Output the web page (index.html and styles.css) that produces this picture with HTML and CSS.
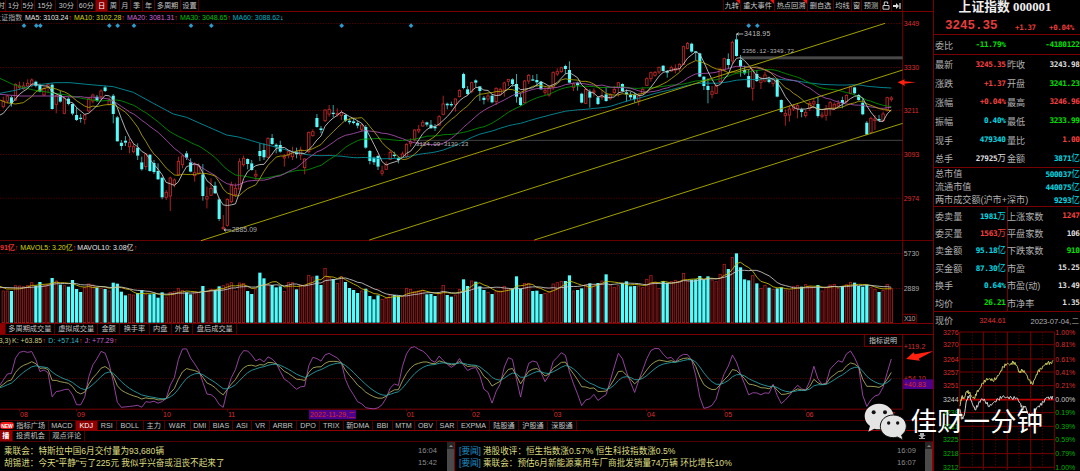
FILE: index.html
```html
<!DOCTYPE html>
<html lang="zh-CN">
<head>
    <meta charset="UTF-8">
    <title>上证指数 000001</title>
    <link rel="stylesheet" href="styles.css">
</head>
<body>
    <div class="app">
        <main class="left">
            <nav class="toolbar">
                <div class="tabs periods">
                    <span class="cut">时</span><span>1分</span><span>5分</span><span>15分</span><span>30分</span><span>60分</span><span class="active">日</span><span>周</span><span>月</span><span>季</span><span>年</span><span>多周期</span><span>设置</span>
                </div>
                <div class="tabs tools">
                    <span class="hot">九转</span><span class="hot">重大事件</span><span class="hot">热点回溯</span><span>删自选</span><span>均线</span><span>窗</span><span>预测</span>
                    <span><svg width="8" height="9" viewBox="0 0 8 9"><path d="M1 4.5h6v3.7H1zM2.3 4.5V1h3.4v2" fill="none" stroke="#ccc"/></svg></span>
                    <span><svg width="8" height="8" viewBox="0 0 8 8"><path d="M0 3h3V1l3 3-3 3V5H0zM6.4 1h1.2v6H6.4z" fill="#ddd"/></svg></span>
                </div>
            </nav>

            <!-- Price -->
            <svg class="price" viewBox="0 36 2802 687">
                <path class="grid" d="M0 70.5H2708M0 202.5H2708M0 331.5H2708M0 463.5H2708M0 594.5H2708"/>
                <path class="frame" d="M2708 36V723M0 722H2800"/>
                <path d="M1240 421H2708" stroke="#444" stroke-width="3"/>
                <rect x="2220" y="169" width="488" height="9" fill="#484848"/>
                <g id="candles"></g>
                <g id="priceLines"></g>
                <path class="trend" d="M603 722L2655 70M1108 720L2708 210M1603 720L2708 370"/>
                <g id="marks"></g>
                <text y="59"><tspan x="-17" fill="#aaa" textLength="84">上证指数</tspan><tspan x="75" fill="#e4e4e4" textLength="130">MA5: 3103.24</tspan><tspan class="up">↑</tspan><tspan x="222" fill="#d4d400" textLength="142">MA10: 3102.28</tspan><tspan class="up">↑</tspan><tspan x="381" fill="#cc64d4" textLength="142">MA20: 3081.31</tspan><tspan class="up">↑</tspan><tspan x="540" fill="#00c000" textLength="142">MA30: 3048.65</tspan><tspan class="up">↑</tspan><tspan x="698" fill="#00b0c0" textLength="142">MA60: 3088.62</tspan><tspan class="down">↓</tspan></text>
                <text x="2232" y="108" fill="#bbb" textLength="79">3418.95</text>
                <path d="M2210 102h20M2216 98l-6 4 6 4M672 690h22M678 686l-6 4 6 4" fill="none" stroke="#ccc" stroke-width="2.5"/>
                <text x="695" y="696" fill="#aaa" textLength="76">2885.09</text>
                <text class="mono" x="2226" y="160" textLength="156">3356.12-3349.72</text>
                <text class="mono" x="1247" y="438" textLength="158">3124.09-3130.23</text>
                <g class="axis">
                    <text x="2711" y="78">3449</text><text x="2711" y="210">3330</text><text x="2711" y="340">3211</text><text x="2711" y="471">3093</text><text x="2711" y="602">2974</text>
                </g>
                <path d="M2693 247L2714 238 2713 244 2748 247 2713 251 2715 258Z" fill="#ff2010"/>
            </svg>

            <!-- Volume -->
            <svg class="volume" viewBox="0 18 2802 249">
                <path class="grid" d="M0 55.5H2708M0 160.5H2708"/>
                <g id="bars"></g>
                <g id="volLines"></g>
                <path class="frame" d="M2708 18V267M0 265.5H2800"/>
                <text y="45"><tspan x="0" class="up">91亿↑</tspan><tspan x="61" fill="#d4d400">MAVOL5: 3.20亿</tspan><tspan class="up">↑</tspan><tspan x="232" fill="#e4e4e4">MAVOL10: 3.08亿</tspan><tspan class="up">↑</tspan></text>
                <g fill="#aaa">
                    <text x="2711" y="64">5730</text><text x="2711" y="167">2889</text><text x="2712" y="257" textLength="34">X10</text>
                </g>
                <path class="frame" d="M2708 238H2749V262H2708"/>
            </svg>

            <nav class="tabs voltabs">
                <span class="active"></span><span>多周期成交量</span><span>虚拟成交量</span><span>金额</span><span>换手率</span><span>内盘</span><span>外盘</span><span>盘后成交量</span>
            </nav>

            <!-- KDJ and date axis -->
            <svg class="kdj" viewBox="0 297 2802 258">
                <path class="grid" d="M0 334.5H2708M0 430.5H2708"/>
                <path class="frame" d="M0 298.5H2800M2708 297V523M0 522.5H2708M2593 298V334H2708"/>
                <path class="frame" d="M59 523v6M230 523v6M488 523v6M683 523v6M1220 523v6M1415 523v6M1660 523v6M1940 523v6M2173 523v6M2416 523v6"/>
                <g id="kdjLines"></g>
                <text y="324"><tspan x="-4" fill="#c8c880">3,3)</tspan><tspan x="36" fill="#c8c880">K: +63.85</tspan><tspan class="up">↑</tspan><tspan x="145" fill="#30b8c0">D: +57.14</tspan><tspan class="up">↑</tspan><tspan x="254" fill="#cc64d4">J: +77.29</tspan><tspan class="up">↑</tspan></text>
                <text x="2607" y="325" fill="#ccc" textLength="84">指标说明</text>
                <g class="axis">
                    <text x="2711" y="343" textLength="65">+119.2</text>
                    <text x="2711" y="437" textLength="67">+54.10</text>
                    <rect x="2709" y="433" width="91" height="29" fill="#4c008c"/>
                    <text x="2711" y="455" textLength="67">+40.83</text>
                    <text x="60" y="545">08</text><text x="231" y="545">09</text><text x="489" y="545">10</text><text x="684" y="545">11</text>
                    <rect x="927" y="525" width="141" height="28" fill="#4c008c"/>
                    <text x="930" y="546" textLength="136">2022-11-29,二</text>
                    <text x="1220" y="545">01</text><text x="1416" y="545">02</text><text x="1661" y="545">03</text><text x="1941" y="545">04</text><text x="2173" y="545">05</text><text x="2417" y="545">06</text><text x="2661" y="545">07</text>
                </g>
                <path d="M2718 372L2741 352 2744 358 2800 348 2756 371 2760 377Z" fill="#ff2010"/>
            </svg>

            <nav class="tabs indicators">
                <span class="new">NEW</span><span>指标广场</span><span>MACD</span><span class="active">KDJ</span><span>RSI</span><span>BOLL</span><span>主力</span><span>W&amp;R</span><span>DMI</span><span>BIAS</span><span>ASI</span><span>VR</span><span>ARBR</span><span>DPO</span><span>TRIX</span><span>新DMA</span><span>BBI</span><span>MTM</span><span>OBV</span><span>SAR</span><span>EXPMA</span><span>陆股通</span><span>沪股通</span><span>深股通</span>
            </nav>
            <nav class="tabs newstabs">
                <span class="active">播</span><span>投资机会</span><span>观点评论</span>
                <svg class="pin" width="8" height="6" viewBox="0 0 8 6"><path d="M2 0h4v2h2L5 4v1h2v1H1V5h2V4L0 2h2z" fill="#aaa"/></svg>
            </nav>
            <section class="news">
                <ul>
                    <li><b>乘联会：特斯拉中国6月交付量为93,680辆</b><time>16:04</time></li>
                    <li><b>胡锡进：今天"平静"亏了225元 我似乎兴奋或沮丧不起来了</b><time>15:42</time></li>
                </ul>
                <div class="scroll"></div>
                <ul>
                    <li><i>[要闻]</i><b>港股收评：恒生指数涨0.57% 恒生科技指数涨0.5%</b><time>16:09</time></li>
                    <li><i>[要闻]</i><b>乘联会：预估6月新能源乘用车厂商批发销量74万辆 环比增长10%</b><time>16:07</time></li>
                </ul>
                <div class="scroll"></div>
            </section>
        </main>

        <aside class="quote">
            <h1>上证指数 <span>000001</span></h1>
            <div class="last"><strong>3245.35</strong><em>+1.37</em><em>+0.04%</em></div>
            <div class="rows bid"><span>委比</span><b class="g">-11.79%</b><span></span><b class="g">-4180122</b></div>
            <div class="rows main">
                <span>最新</span><b class="r">3245.35</b><span>昨收</span><b>3243.98</b>
                <span>涨跌</span><b class="r">+1.37</b><span>开盘</span><b class="g">3241.23</b>
                <span>涨幅</span><b class="r">+0.04%</b><span>最高</span><b class="r">3246.96</b>
                <span>振幅</span><b class="c">0.40%</b><span>最低</span><b class="g">3233.99</b>
                <span>现手</span><b class="c">479340</b><span>量比</span><b class="r">1.00</b>
                <span>总手</span><b>27925<u>万</u></b><span>金额</span><b class="c">3871<u>亿</u></b>
            </div>
            <div class="caps">
                <p><span>总市值</span><b class="c">500037<u>亿</u></b></p>
                <p><span>流通市值</span><b class="c">440075<u>亿</u></b></p>
                <p><span>两市成交额(沪市+深市)</span><b class="c">9293<u>亿</u></b></p>
            </div>
            <div class="rows stats">
                <span>委卖量</span><b class="c">1981<u>万</u></b><span>上涨家数</span><b class="r">1247</b>
                <span>委买量</span><b class="r">1563<u>万</u></b><span>平盘家数</span><b>106</b>
                <span>卖金额</span><b class="c">95.18<u>亿</u></b><span>下跌家数</span><b class="g">910</b>
                <span>买金额</span><b class="c">87.30<u>亿</u></b><span>市盈</span><b>15.25</b>
                <span>换手</span><b class="c">0.64%</b><span>市盈(动)</span><b>13.49</b>
                <span>均价</span><b class="g">26.21</b><span>市净率</span><b>1.35</b>
            </div>
            <div class="now"><span>现价</span><em>3244.61</em><time>2023-07-04,二</time></div>
            <svg class="mini" viewBox="222 56 438 427" id="mini"></svg>
        </aside>

        <div class="watermark">
            <svg width="43" height="37" viewBox="0 0 129 111">
                <path d="M45 2C20 2 2 19 2 40c0 12 6 22 16 29l-5 17 18-9c5 1 9 2 14 2 26 0 44-17 44-38S70 2 45 2Z" fill="#e4e4e4"/>
                <path d="M88 36c-23 0-39 15-39 34s16 34 39 34c4 0 8-1 12-2l17 9-4-15c9-6 14-15 14-26 0-19-16-34-39-34Z" fill="#e4e4e4" stroke="#111" stroke-width="3"/>
                <g fill="#111"><circle cx="29" cy="28" r="6"/><circle cx="63" cy="28" r="6"/><circle cx="74" cy="60" r="5"/><circle cx="101" cy="60" r="5"/></g>
            </svg>
            <span>佳财一分钟</span>
        </div>
    </div>
    <script src="chart.js"></script>
</body>
</html>
```
FILE: styles.css
```css
* {
    box-sizing: border-box;
}

body {
    margin: 0;
    background: #000;
    color: #bbb;
    font-family: "Liberation Sans", "Noto Sans CJK SC", sans-serif;
    font-size: 7.2px;
    overflow: hidden;
}

.app {
    position: relative;
    display: flex;
    width: 1080px;
    height: 471px;
    overflow: hidden;
}

.left {
    width: 933px;
    display: flex;
    flex-direction: column;
    flex-shrink: 0;
}

svg {
    display: block;
    flex-shrink: 0;
}

svg text {
    font-size: 21px;
    white-space: pre;
}

.price { width: 934px; height: 229px; }
.volume { width: 934px; height: 83px; }
.kdj { width: 934px; height: 86px; }

.grid {
    stroke: #5a0000;
    stroke-width: 2.5;
    stroke-dasharray: 4 4;
    fill: none;
}

.frame {
    stroke: #780000;
    stroke-width: 3;
    fill: none;
}

.trend {
    stroke: #a0a000;
    stroke-width: 3;
}

.up { fill: #f03030; font-weight: bold; }
.down { fill: #40f0f0; font-weight: bold; }
.axis { fill: #dc2c2c; }

text.mono {
    font-family: "Liberation Mono", monospace;
    font-size: 18px;
    fill: #b4b4b4;
}

/* tab bars */
.toolbar {
    display: flex;
    justify-content: space-between;
    height: 12px;
    padding-right: 30px;
    border-bottom: 1px solid #780000;
    flex-shrink: 0;
}

.tabs {
    display: grid;
    flex-shrink: 0;
    line-height: 10px;
}

.tabs span {
    position: relative;
    display: flex;
    align-items: center;
    justify-content: center;
    border-right: 1px solid #500000;
    white-space: nowrap;
    overflow: hidden;
    color: #c4c4c4;
}

.tabs .active {
    background: #900000;
    color: #fff;
}

.periods { grid-template-columns: 6px 16px 13px 21px 21.5px 18.5px 12px 11.5px 11.5px 12px 12px 26px 18px; }
.periods .cut { justify-content: flex-end; }

.tools { grid-template-columns: 18.3px 34px 33px 26px 18px 10px 19px 10.7px 11.3px; }
.tools span:first-child { border-left: 1px solid #500000; }

.hot::after {
    content: "";
    position: absolute;
    top: 0;
    right: 0;
    border-top: 4px solid #f01010;
    border-left: 4px solid transparent;
}

.voltabs {
    height: 10px;
    grid-template-columns: 5.7px 49.3px 43.3px 21.7px 30px 21.7px 21.7px 44px;
}

.indicators {
    height: 11px;
    border-top: 1px solid #500000;
    border-bottom: 1px solid #900000;
    grid-template-columns: 14px 34.5px 27.5px 21.5px 19.5px 26.5px 21.5px 25.5px 19.5px 23px 19px 17.5px 27.5px 23px 23.5px 29.5px 20px 22px 22px 21px 32px 29px 29px 29px;
}

.indicators .new {
    margin: 1px 0;
    border: 0;
    border-radius: 3px;
    background: #f01818;
    color: #fff;
    font-size: 5px;
    font-weight: bold;
}

.newstabs {
    height: 11px;
    border-bottom: 1px solid #500000;
    grid-template-columns: 12.5px 37px 35.5px 1fr;
}

.newstabs .active { font-weight: bold; }

.pin {
    justify-self: end;
    margin: 2px 7px 0 0;
}

/* news */
.news {
    display: grid;
    grid-template-columns: 447px 8px 470px 8px;
    height: 29px;
}

.news ul {
    list-style: none;
    margin: 0;
    padding: 3px 10px 0 4px;
    font-size: 8.6px;
}

.news li {
    display: flex;
    height: 12.4px;
    line-height: 12.4px;
    white-space: nowrap;
}

.news .scroll + ul { padding-right: 9px; }

.news b {
    font-weight: normal;
    color: #dcdc80;
}

.news i {
    font-style: normal;
    color: #2090c8;
    width: 24px;
}

.news time {
    margin-left: auto;
    color: #8c8c8c;
    font-size: 7.6px;
}

.scroll {
    display: flex;
    justify-content: center;
    background: linear-gradient(#262626 7px, #4a4a4a 7px);
    border-right: 1px solid #900000;
}

.scroll::before {
    content: "";
    height: 0;
    margin-top: 3px;
    border: 2px solid transparent;
    border-top: 0;
    border-bottom-color: #888;
}

/* quote panel */
.quote {
    width: 147px;
    border-left: 1px solid #780000;
    font-size: 9.1px;
    color: #b0b0b0;
}

h1 {
    margin: 0;
    height: 16px;
    padding-right: 4px;
    line-height: 15px;
    font-size: 12.8px;
    text-align: center;
    color: #eee;
    white-space: nowrap;
    font-family: "Liberation Serif", "Noto Sans CJK SC", serif;
}

.last {
    display: flex;
    align-items: center;
    height: 18px;
    padding: 2px 5px 0 11px;
    color: #e83c3c;
    font-family: "Liberation Mono", monospace;
}

.last strong {
    font-size: 12.5px;
    width: 70px;
}

.last em {
    font: bold 7.4px "DejaVu Sans Mono", monospace;
    letter-spacing: -0.32px;
    width: 34px;
    padding-top: 2px;
    white-space: nowrap;
}

.last em:last-child { width: 26px; }

.rows {
    display: grid;
    grid-template-columns: 28px 44px 38px 34.5px;
    align-items: center;
    border-top: 1px solid #780000;
    padding-left: 1px;
    white-space: nowrap;
}

.rows b, .caps b {
    font: bold 7.7px "DejaVu Sans Mono", monospace;
    letter-spacing: -0.34px;
    color: #ddd;
    text-align: right;
    white-space: nowrap;
}

.rows b:nth-child(4n + 2) { padding-right: 1.5px; }

.rows b u, .caps b u {
    font: 8.6px "Noto Sans CJK SC", sans-serif;
    line-height: 8px;
    text-decoration: none;
}

.rows .r { color: #f84040; }
.rows .g { color: #00e000; }
.rows .c, .caps .c { color: #00dce4; }

.bid { height: 20px; }
.main { height: 113px; grid-auto-rows: 18.8px; }

.caps {
    height: 39px;
    border-top: 1px solid #780000;
    padding: 0 0.5px 0 1px;
}

.caps p {
    display: flex;
    justify-content: space-between;
    align-items: center;
    margin: 0;
    height: 12.8px;
    line-height: 12px;
    white-space: nowrap;
}

.stats {
    height: 105px;
    grid-auto-rows: 17.4px;
    background: linear-gradient(#780000, #780000) 73px 0 / 1px 100% no-repeat;
}

.now {
    display: flex;
    align-items: center;
    height: 17px;
    border-top: 1px solid #780000;
    padding-left: 1px;
    white-space: nowrap;
}

.now em {
    margin-left: 26px;
    font-style: normal;
    font-size: 7.4px;
    color: #e03030;
}

.now time {
    margin-left: auto;
    font-size: 7.6px;
    padding-right: 1px;
}

.mini {
    width: 146px;
    height: 142.3px;
}

/* watermark lies over the charts */
.watermark {
    position: absolute;
    left: 863.5px;
    top: 402.5px;
    display: flex;
    align-items: center;
    gap: 4px;
    color: #fff;
    font-size: 26.5px;
    line-height: 38px;
    white-space: nowrap;
}
```
FILE: chart.js
```javascript
// direction, body top, body bottom, high, low (chart units, 3 per pixel)
const candles = `u 303 320 290 325,u 288 303 285 310,d 292 310 287 320,u 253 300 250 303,u 258 262 245 270,u 258 266 246 270,u 250 258 238 262,u 240 255 235 262,d 245 258 242 262,d 256 275 250 277,
u 265 285 262 288,u 254 262 250 280,d 254 327 250 329,u 286 313 280 340,d 284 305 272 308,u 296 340 292 343,d 296 312 292 316,d 312 341 310 346,d 345 360 322 363,d 353 357 342 368,
u 345 358 342 373,u 296 333 292 337,u 285 303 281 310,d 290 303 285 306,u 273 290 268 300,d 262 273 257 276,u 303 314 292 316,d 287 342 282 370,d 352 424 348 425,d 428 438 420 450,
d 422 428 408 438,u 428 440 415 460,u 440 455 430 460,d 443 467 430 480,d 487 508 470 512,u 462 500 460 510,d 464 513 462 515,d 489 516 480 522,d 513 538 490 540,d 533 592 530 598,
u 577 592 570 600,u 534 588 530 633,u 540 553 535 562,u 484 523 470 526,u 468 494 463 505,d 460 473 453 480,d 487 515 475 517,u 518 527 487 545,u 500 520 490 525,d 523 588 492 602,
u 590 597 560 625,u 565 586 535 588,d 557 580 545 582,d 598 657 593 663,u 682 686 645 690,u 598 676 595 680,u 556 605 545 610,u 565 584 550 590,u 485 567 475 567,u 475 494 467 500,
d 477 492 475 508,d 490 510 480 512,u 523 528 510 540,d 453 468 430 483,d 450 472 430 480,u 415 472 412 475,d 414 432 402 435,d 434 440 430 460,d 435 455 422 458,u 470 474 462 500,
u 455 465 450 475,u 458 470 440 480,d 455 463 443 475,u 450 465 440 480,u 477 503 475 523,u 397 455 395 460,u 395 407 388 410,d 354 381 342 383,d 385 390 378 400,u 330 362 328 366,
u 328 342 315 350,d 338 342 315 352,u 340 344 325 350,u 338 346 330 360,d 345 362 342 366,d 362 367 355 373,d 364 369 355 373,d 369 377 362 385,u 375 388 370 395,d 381 443 375 446,
d 453 483 450 493,d 473 487 470 495,d 468 500 465 510,u 513 520 497 527,u 493 508 485 510,u 457 478 450 480,d 464 468 455 473,d 474 480 470 490,u 462 472 455 475,u 433 470 430 475,
u 425 430 415 440,u 390 418 388 425,u 388 393 375 400,u 367 378 360 380,d 367 374 365 380,d 374 385 360 386,d 380 385 372 393,u 350 375 345 378,u 312 343 287 346,d 311 316 308 328,
d 312 316 305 320,u 297 313 295 335,u 271 290 268 292,d 222 264 218 268,d 268 282 258 286,u 248 275 245 280,d 241 248 238 262,d 259 273 258 303,d 293 300 288 313,u 288 297 280 305,
d 287 307 283 310,u 265 305 262 315,u 268 283 263 286,u 249 270 245 290,u 238 244 237 258,d 238 252 235 260,d 252 290 222 308,d 292 315 280 318,u 243 308 240 310,u 226 243 222 252,
d 238 242 225 243,d 240 247 222 260,d 245 268 243 270,u 272 277 260 285,u 265 285 255 290,u 218 262 214 270,u 215 222 205 228,u 203 215 200 218,d 198 207 194 222,d 210 248 184 250,
u 252 262 247 273,d 248 256 245 272,d 281 308 278 310,u 268 310 262 312,d 275 293 268 323,u 273 277 265 290,d 292 312 290 315,u 288 292 270 300,d 283 303 262 305,u 285 295 280 300,
u 268 278 258 282,u 248 262 246 290,d 252 273 250 277,d 277 283 268 305,d 285 292 275 300,d 285 297 278 308,u 288 303 280 317,u 268 280 262 283,u 236 256 232 258,u 218 236 215 245,
u 217 226 213 230,u 202 216 200 222,d 197 213 195 215,d 213 218 210 233,u 203 213 197 215,u 205 210 193 220,u 193 206 190 215,u 140 193 137 195,u 130 145 126 148,d 131 155 128 158,
d 154 158 153 180,d 160 230 158 232,d 230 258 228 270,d 258 270 235 310,u 275 283 258 295,u 258 280 253 282,u 208 245 205 250,u 176 210 173 215,d 177 195 160 207,u 127 183 122 193,
d 118 168 102 170,d 180 200 165 230,d 210 220 197 225,d 228 262 208 264,u 210 265 206 302,d 222 243 210 246,u 240 247 230 267,u 225 243 215 247,d 238 246 230 250,u 237 250 232 260,
d 238 290 236 292,d 300 336 298 338,u 340 347 328 377,u 327 345 315 365,u 318 327 312 333,u 317 325 310 355,d 328 336 323 352,u 337 347 330 353,u 310 325 303 333,u 305 312 297 325,
d 312 348 290 353,u 345 349 335 355,u 327 346 315 362,u 308 325 303 347,u 313 325 307 330,u 310 318 300 323,d 300 309 290 325,u 286 305 283 310,u 260 280 257 283,d 262 280 260 283,
d 285 300 282 302,d 308 343 295 346,d 368 404 363 406,u 355 397 350 400,u 357 362 345 390,d 357 362 345 364,u 342 362 335 365,u 293 330 290 335,u 294 298 288 305`
    .split(',').map(s => {
        const p = s.trim().split(' ');
        return { up: p[0] === 'u', top: +p[1], bottom: +p[2], high: +p[3], low: +p[4] };
    });

const volumes = [
    168,168,168,152,153,155,152,143,152,141,152,148,129,138,149,152,155,135,162,171,158,147,150,158,160,162,168,143,146,170,
    181,178,180,174,165,178,178,176,188,172,186,172,170,160,166,172,178,173,172,153,170,163,165,154,152,147,143,168,144,145,
    168,177,162,113,130,149,150,157,154,169,143,143,163,150,152,121,126,122,150,100,127,132,145,125,141,159,165,174,168,161,
    183,193,181,193,190,180,180,182,185,160,163,170,168,167,178,177,183,175,151,180,185,180,163,133,153,138,140,154,165,172,
    177,170,168,154,162,160,124,161,145,145,168,167,177,175,170,147,143,139,138,121,168,165,160,150,145,150,144,138,118,150,
    157,152,145,139,154,153,153,158,133,122,142,160,138,143,140,136,140,115,138,134,133,123,134,124,135,140,118,88,102,67,
    55,97,133,136,122,145,160,151,158,163,160,157,165,168,155,152,155,149,155,158,150,168,157,150,148,160,153,149,142,143,
    153,155,150,158,163,171,166,148,160
];

// x,y pairs of the J curve
const jCurve = [
    0,450,22,417,36,415,46,370,58,352,70,349,83,352,95,349,107,372,119,410,131,404,144,412,156,486,168,470,180,468,192,464,205,462,217,478,229,509,241,511,
    253,493,265,430,277,392,290,373,302,349,314,351,327,385,340,440,352,502,364,517,400,513,413,511,425,517,437,500,449,502,461,498,473,505,486,500,498,492,
    511,450,523,428,535,374,547,342,559,340,571,368,583,385,595,402,608,440,620,477,640,480,657,508,670,517,682,465,694,428,706,405,718,365,730,347,742,347,
    755,360,767,378,779,371,791,382,803,365,816,372,828,383,840,408,852,432,865,440,877,452,889,463,901,455,913,460,925,395,938,367,950,370,962,380,974,360,
    987,355,999,362,1011,368,1023,378,1035,430,1048,460,1060,478,1072,500,1084,505,1096,518,1120,522,1140,517,1155,498,1170,460,1185,445,1195,452,1207,395,
    1220,355,1232,338,1244,335,1256,343,1268,348,1280,358,1292,375,1305,382,1317,363,1330,377,1342,388,1355,398,1367,388,1378,370,1390,390,1402,407,1415,400,
    1427,397,1439,420,1451,462,1464,472,1476,505,1488,470,1500,450,1512,398,1525,368,1537,372,1549,430,1561,490,1573,430,1586,385,1598,378,1610,380,1622,410,
    1635,440,1647,422,1659,380,1671,368,1684,353,1696,360,1708,410,1720,445,1732,475,1744,513,1757,495,1769,492,1781,477,1793,497,1806,487,1818,480,1830,440,
    1843,395,1855,355,1867,370,1879,410,1891,440,1903,475,1915,440,1928,405,1940,372,1952,347,1965,340,1977,341,1989,357,2001,370,2013,366,2025,382,2038,365,
    2050,358,2062,358,2075,375,2087,420,2099,485,2111,520,2125,517,2138,510,2150,490,2162,445,2175,410,2187,390,2197,360,2209,380,2221,415,2235,450,2247,482,
    2260,472,2272,474,2284,480,2296,473,2308,475,2319,447,2331,480,2344,506,2356,495,2368,482,2380,465,2392,450,2405,462,2417,465,2429,440,2441,392,2453,430,
    2466,448,2478,445,2490,403,2502,390,2515,377,2527,382,2539,357,2551,347,2565,370,2576,395,2588,480,2600,515,2612,495,2624,483,2636,481,2650,455,2661,415,2673,372
];

const CYAN = '#54fcfc';
const RED = '#c02828';
const xAt = i => 9.8 + 12.22 * i;
const byId = id => document.getElementById(id);

function line(points, color, width = 2.6) {
    return `<polyline points="${points.map(p => p.map(v => v.toFixed(1)).join(',')).join(' ')}" fill="none" stroke="${color}" stroke-width="${width}"/>`;
}

// moving average; head holds the points before enough values exist
function average(values, n, head) {
    const points = [...head];
    for (let i = n - 1; i < values.length; i++) {
        const sum = values.slice(i - n + 1, i + 1).reduce((a, b) => a + b, 0);
        points.push([xAt(i), sum / n]);
    }
    return points;
}

// candles
byId('candles').innerHTML = candles.map((c, i) => {
    const x = xAt(i);
    const color = c.up ? RED : CYAN;
    const wick = `<path d="M${x} ${c.high}V${c.top}M${x} ${c.bottom}V${c.low}" stroke="${c.up ? RED : '#3cbcbc'}" stroke-width="2.6"/>`;
    const body = c.up
        ? `<rect x="${x - 3.5}" y="${c.top}" width="7" height="${c.bottom - c.top}" fill="#000" stroke="${color}" stroke-width="2.6"/>`
        : `<rect x="${x - 4.6}" y="${c.top}" width="9.2" height="${c.bottom - c.top}" fill="${color}"/>`;
    return wick + body;
}).join('');

const closes = candles.map(c => c.up ? c.top : c.bottom);
byId('priceLines').innerHTML =
    line(average(closes, 60, [[0,280],[50,270],[100,256],[165,248],[210,248],[260,253],[340,260],[400,277],[460,310],[520,342],[560,352],[600,370],[680,405],[715,411]]), '#0096a4') +
    line(average(closes, 30, [[0,235],[40,254],[100,270],[155,278],[200,285],[250,296],[300,303],[350,300]]), '#009400') +
    line(average(closes, 20, [[0,283],[60,288],[155,288],[220,291]]), '#a850b0') +
    line(average(closes, 10, [[0,300],[20,308],[46,312],[70,308],[95,290],[107,276]]), '#b0a400') +
    line(average(closes, 5, [[0,345],[10,340],[22,325],[34,312],[46,297]]), '#c8c8c8');

byId('marks').innerHTML = [72, 109, 121, 328, 353, 402, 573, 634, 1025, 1233, 2246, 2272].map(x =>
    `<path d="M${x - 7} 77l7-7 7 7-7 7z" fill="#2c9ccc"/>`).join('');

// volume
byId('bars').innerHTML = volumes.map((v, i) => {
    const x = xAt(i);
    return candles[i].up
        ? `<rect x="${x - 3.5}" y="${v}" width="7" height="${263 - v}" fill="#180000" stroke="#a82020" stroke-width="2.4"/>`
        : `<rect x="${x - 4.8}" y="${v}" width="9.6" height="${263 - v}" fill="${CYAN}"/>`;
}).join('');
byId('volLines').innerHTML =
    line(average(volumes, 5, [[0,154],[20,162]]), '#c8bc00') +
    line(average(volumes, 10, [[0,157],[60,159]]), '#c8c8c8');

// KDJ: J = 3K - 2D, D is the smoothed K
function jAt(x) {
    let n = 0;
    while (n < jCurve.length - 4 && jCurve[n + 2] < x) n += 2;
    const t = Math.min(1, (x - jCurve[n]) / (jCurve[n + 2] - jCurve[n]));
    return jCurve[n + 1] + t * (jCurve[n + 3] - jCurve[n + 1]);
}
let d = 458;
const kLine = [[0, 455]], dLine = [[0, 458]], jLine = [[0, 450]];
for (let i = 0; i < candles.length; i++) {
    const x = xAt(i), j = jAt(x);
    d = (6 * d + j) / 7;
    jLine.push([x, j]);
    dLine.push([x, d]);
    kLine.push([x, (j + 2 * d) / 3]);
}
byId('kdjLines').innerHTML = line(jLine, '#a84cb4') + line(kLine, '#b0b060') + line(dLine, '#28a4ac');

// intraday chart
const levels = [
    [68, '3276', '1.00%'], [106, '3270', '0.81%'], [149, '3264', '0.61%'], [188, '3257', '0.41%'], [229, '3251', '0.21%'], [271, '3244', '0.00%'],
    [310, '3238', '0.19%'], [351, '3231', '0.39%'], [391, '3225', '0.59%'], [433, '3218', '0.79%'], [474, '3212', '1.00%']
];
const noisy = flat => {
    const pts = [];
    for (let n = 0; n < flat.length - 2; n += 2) {
        for (let s = 0; s < 4; s++) {
            const t = s / 4;
            const wobble = s ? Math.sin(n * 7.3 + s * 2.6) * 5 : 0;
            pts.push([flat[n] + t * (flat[n + 2] - flat[n]), flat[n + 1] + t * (flat[n + 3] - flat[n + 1]) + wobble]);
        }
    }
    return pts;
};
let mini = '';
levels.forEach(([y, price, pct], n) => {
    const color = n < 5 ? '#dc2c2c' : n === 5 ? '#ccc' : '#00b400';
    mini += `<path d="M299 ${y}H583" stroke="${n === 5 ? '#c00000' : '#780000'}" stroke-width="${n === 5 ? 5 : 3}"/>`;
    mini += `<text x="249" y="${y + 8}" fill="${color}" textLength="47">${price}</text><text x="586" y="${y + 8}" fill="${color}" textLength="60">${pct}</text>`;
});
mini += '<path d="M299 68V483M370 68V483M442 68V483M512 68V483M583 68V483" stroke="#780000" stroke-width="3"/>';
mini += '<path d="M337 68V483M407 68V483M477 68V483M547 68V483" stroke="#600000" stroke-width="2.5" stroke-dasharray="4 5"/>';
mini += line(noisy([300,300,305,330,312,320,320,272,328,258,336,280,345,302,355,285,365,268,375,275,388,292,400,280,415,270,427,262,440,264,455,266,470,266,480,280,487,298,495,290,505,315,520,318,530,295,540,288,550,278,560,264,570,266,581,264]), '#d0d0d0', 3);
mini += line(noisy([300,290,305,262,312,268,320,246,328,250,335,262,343,268,350,250,358,240,368,222,378,212,388,208,398,214,410,206,420,190,430,172,440,164,452,165,460,158,470,168,478,190,487,182,497,192,507,212,517,225,525,208,533,188,543,178,553,168,563,160,573,162,581,152]), '#c8c860', 3);
byId('mini').innerHTML = mini;
```
